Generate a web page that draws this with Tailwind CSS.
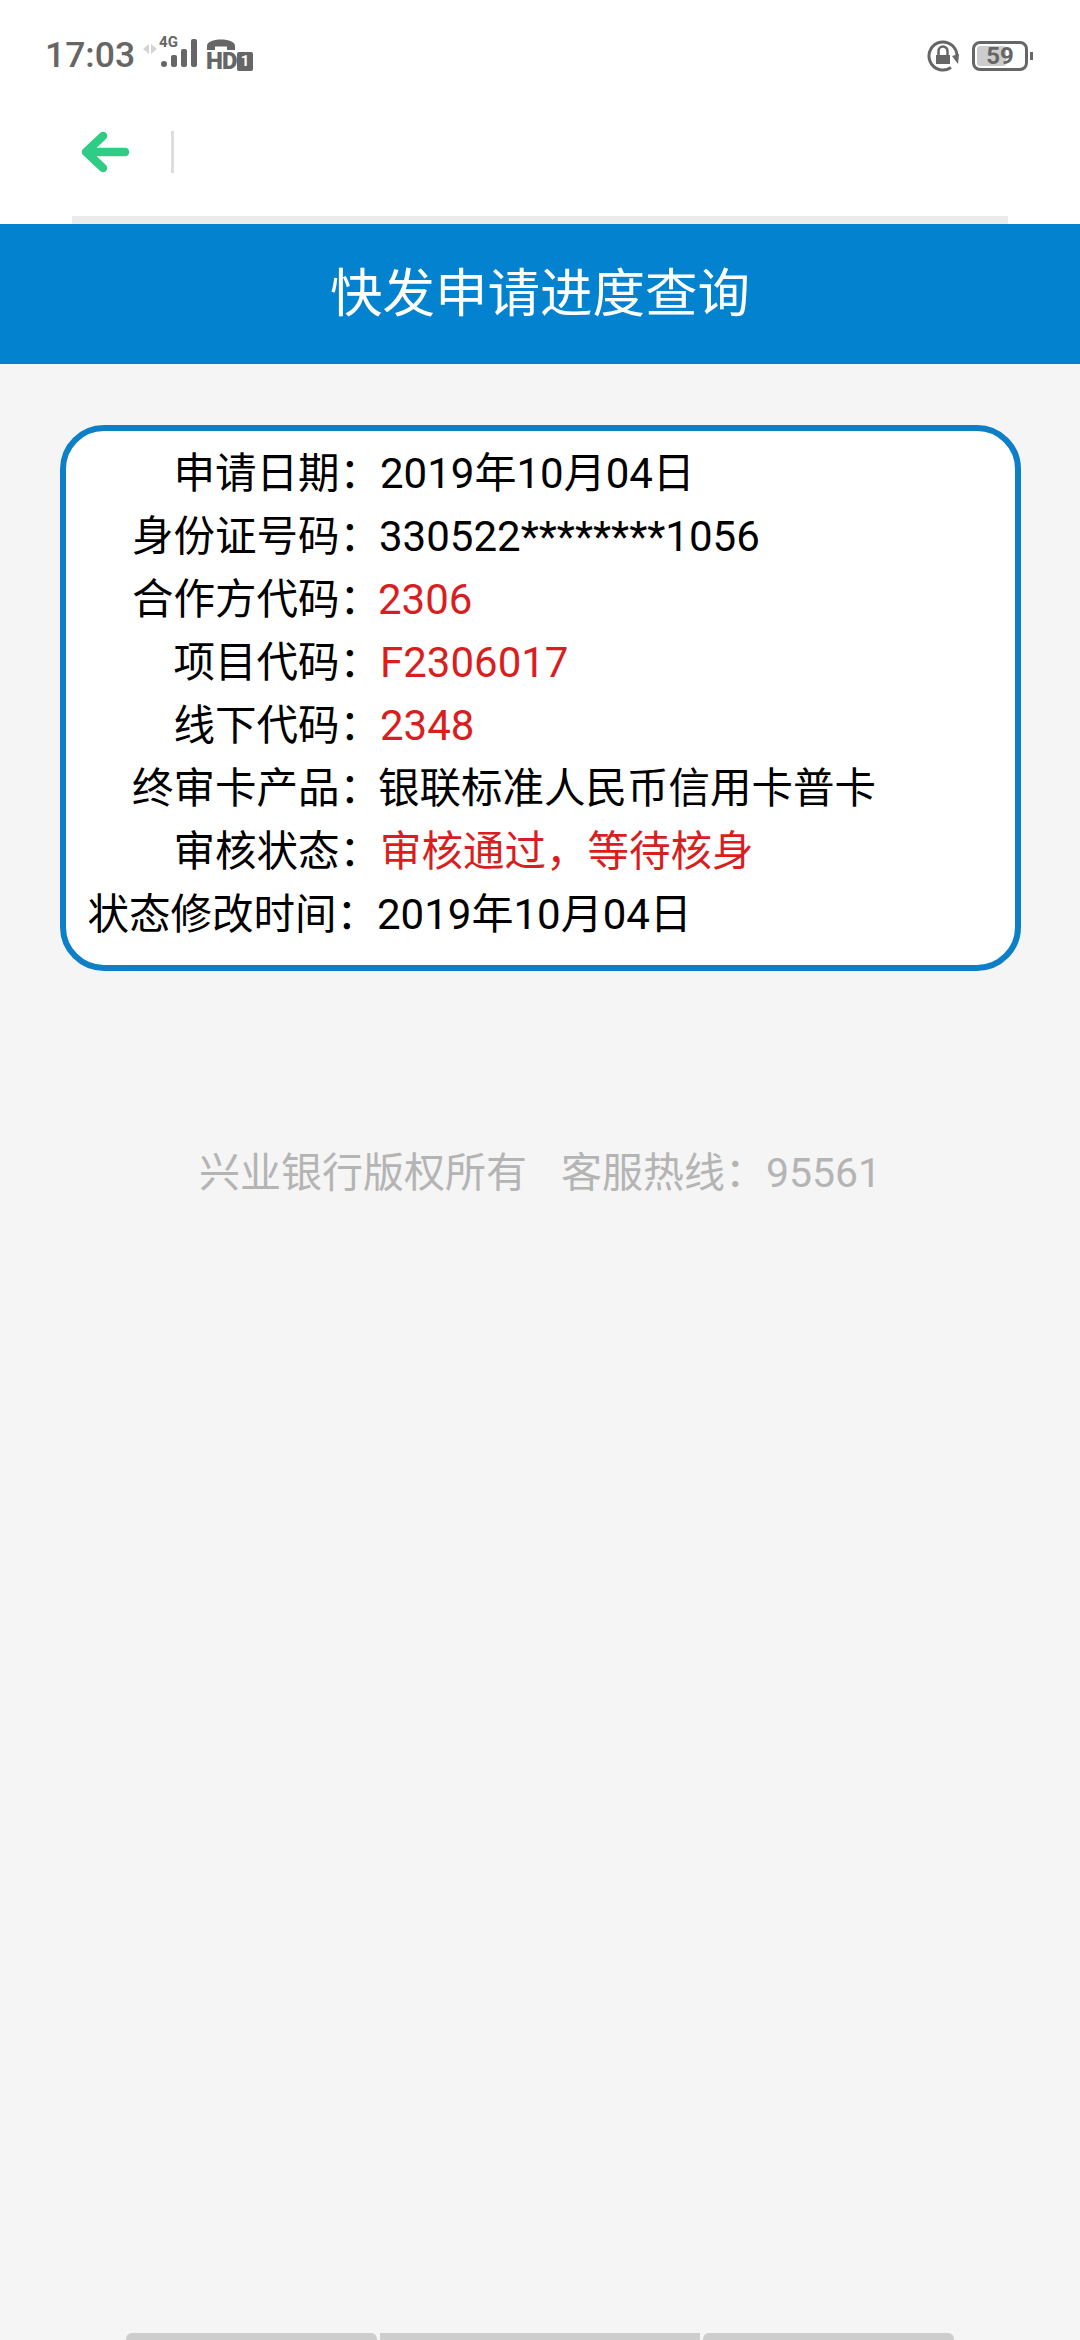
<!doctype html>
<html>
<head>
  <meta charset="utf-8">
  <meta name="viewport" content="width=device-width, initial-scale=1.0">
  <title>快发申请进度查询</title>
  <script src="https://cdn.jsdelivr.net/npm/@tailwindcss/browser@4"></script>
</head>
<body class="w-[1080px] h-[2340px] overflow-hidden bg-[#f5f5f5] font-['Roboto','Noto_Sans_CJK_SC',sans-serif]">
  <div class="flex flex-col w-full h-full">

    <!-- status bar -->
    <div class="flex items-center justify-between h-[112px] bg-white pl-[45px] pr-[47px]">
      <div class="flex items-center">
        <span class="text-[35.500px] leading-none font-medium text-[#666666]">17:03</span>
        <svg class="ml-[8px] -mt-[14px]" width="14" height="12" viewBox="0 0 14 12"><path d="M6 1v10L0 6zM8 1v10l6-5z" fill="#d4d4d4"/></svg>
        <div class="relative w-[40px] h-[32px] ml-[2px] -mt-[4px]">
          <span class="absolute left-0 -top-[3px] text-[15px] leading-[15px] font-bold text-[#666666]">4G</span>
          <svg class="absolute left-0 top-0" width="40" height="32" viewBox="0 0 40 32"><circle cx="5" cy="26" r="3" fill="#666"/><rect x="12" y="17" width="6" height="12" rx="2" fill="#666"/><rect x="22" y="11" width="6" height="18" rx="2" fill="#666"/><rect x="32" y="1" width="6" height="28" rx="2" fill="#666"/></svg>
        </div>
        <div class="flex flex-col gap-[1px] ml-[7px] -mt-[3px]">
          <svg width="32" height="12" viewBox="0 0 32 12"><path d="M1 11V7C1 3 7 0.500 15 0.500S29 3 29 7v4h-8V7.500H9V11z" fill="#666"/></svg>
          <div class="flex items-center">
            <span class="w-[31px] text-[24px] leading-[19px] font-black tracking-[-1px] text-[#666666]">HD</span>
            <span class="w-[16px] h-[19px] bg-[#666666] rounded-[2px] text-white text-[15px] leading-[19px] font-bold text-center">1</span>
          </div>
        </div>
      </div>
      <div class="flex items-center">
        <svg width="34" height="32" viewBox="0 0 34 32">
          <path d="M24 27.500A14 14 0 1 1 30 16" fill="none" stroke="#666" stroke-width="3"/>
          <path d="M25 16l7-2-1 10z" fill="#666"/>
          <path d="M11.500 15v-4a4.500 4.500 0 0 1 9 0v4" fill="none" stroke="#666" stroke-width="2.500"/>
          <rect x="9" y="15" width="14" height="9" fill="#666"/>
        </svg>
        <div class="relative flex items-center justify-center w-[56px] h-[30px] ml-[11px] border-[3px] border-[#666666] rounded-[8px]">
          <div class="absolute left-[2px] top-[2px] bottom-[2px] w-[29px] rounded-[3px] bg-[#cccccc]"></div>
          <span class="relative text-[24px] leading-none font-bold text-[#666666]">59</span>
        </div>
        <div class="w-[3px] h-[8px] ml-[2px] bg-[#666666]"></div>
      </div>
    </div>

    <!-- nav -->
    <div class="flex items-center justify-start h-[104px] bg-white pl-[81px] pb-[24px]">
      <svg width="50" height="44" viewBox="0 0 50 44"><path d="M44 22H6M22 6L5 22l17 16" fill="none" stroke="#2ecc84" stroke-width="8.500" stroke-linecap="round" stroke-linejoin="round"/></svg>
      <div class="w-[3px] h-[42px] ml-[40px] bg-[#dddddd]"></div>
    </div>

    <div class="bg-white px-[72px]">
      <div class="h-[8px] bg-[#ebebeb]"></div>
    </div>

    <!-- title -->
    <div class="flex items-center justify-center h-[140px] bg-[#0382cf] text-white text-[52.500px]">快发申请进度查询</div>

    <!-- card -->
    <div class="w-[961px] h-[546px] mt-[61px] ml-[60px] pt-[11px] bg-white border-[6px] border-[#0c7fc6] rounded-[44px] text-[41.500px] leading-[63px] text-black">
      <div class="flex"><div class="w-[315px] text-right whitespace-nowrap">申请日期：</div><div class="-ml-[1px] text-[42px] whitespace-nowrap">2019年10月04日</div></div>
      <div class="flex"><div class="w-[315px] text-right whitespace-nowrap">身份证号码：</div><div class="-ml-[2px] text-[42px] whitespace-nowrap">330522********1056</div></div>
      <div class="flex"><div class="w-[315px] text-right whitespace-nowrap">合作方代码：</div><div class="-ml-[3px] text-[42px] text-[#d81e1e] whitespace-nowrap">2306</div></div>
      <div class="flex"><div class="w-[315px] text-right whitespace-nowrap">项目代码：</div><div class="-ml-[1px] text-[42px] text-[#d81e1e] whitespace-nowrap">F2306017</div></div>
      <div class="flex"><div class="w-[315px] text-right whitespace-nowrap">线下代码：</div><div class="-ml-[1px] text-[42px] text-[#d81e1e] whitespace-nowrap">2348</div></div>
      <div class="flex"><div class="w-[315px] text-right whitespace-nowrap">终审卡产品：</div><div class="-ml-[3px] whitespace-nowrap">银联标准人民币信用卡普卡</div></div>
      <div class="flex"><div class="w-[315px] text-right whitespace-nowrap">审核状态：</div><div class="-ml-[1px] text-[#d81e1e] whitespace-nowrap">审核通过，等待核身</div></div>
      <div class="flex"><div class="w-[312px] text-right whitespace-nowrap">状态修改时间：</div><div class="-ml-[1px] text-[42px] whitespace-nowrap">2019年10月04日</div></div>
    </div>

    <!-- footer text -->
    <div class="flex justify-center gap-[34px] mt-[171px] text-[41px] leading-[62px] text-[#b4b4b4] whitespace-nowrap">
      <span>兴业银行版权所有</span>
      <span>客服热线：95561</span>
    </div>

    <!-- bottom tabs, cut off by the window edge -->
    <div class="flex gap-[3px] mt-auto h-[7px] pl-[126px] pr-[126px]">
      <div class="w-[251px] bg-[#cdcdcd] rounded-t-[6px]"></div>
      <div class="w-[320px] bg-[#cdcdcd]"></div>
      <div class="w-[251px] bg-[#cdcdcd] rounded-t-[6px]"></div>
    </div>
  </div>
</body>
</html>
